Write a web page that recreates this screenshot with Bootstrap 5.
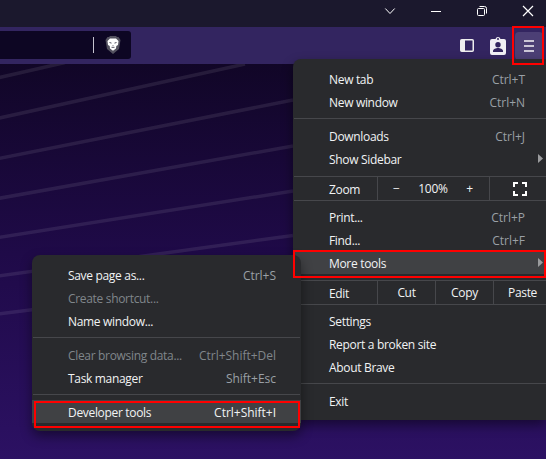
<!DOCTYPE html>
<html lang="en">
<head>
<meta charset="utf-8">
<title>Browser menu</title>
<link href="https://cdn.jsdelivr.net/npm/bootstrap@5.3.0/dist/css/bootstrap.min.css" rel="stylesheet">
<style>
body{width:546px;height:459px;overflow:hidden;font-family:"Open Sans","Noto Sans",sans-serif;font-size:12px;font-weight:500;letter-spacing:-.32px;color:#f1f3f4;background:#2b1060}
svg{display:block;flex:none}
.titlebar{height:27px;background:#1b182d;padding:5px 12px 0 0;gap:34px}
.titlebar svg{width:12px;height:12px}
.tools{height:37px;background:#332560;padding:4px 3px 0 0}
.address{width:131px;height:28px;background:#0d0623;border-radius:0 3px 3px 0;padding-right:10px;gap:11px}
.caret-line{width:1px;height:16px;background:#c5c3cf}
.menu-button{width:28px;height:28px;background:#4c3f75;border-radius:4px}
.page{height:395px;background:linear-gradient(#110627,#1f0a48 48%,#2c1163)}
.menu-panel{background:#292a2d;border-radius:8px;box-shadow:0 5px 12px rgba(0,0,0,.45);white-space:nowrap}
.main-menu{left:293px;top:59px;width:253px;height:361px;border-top-right-radius:0;border-bottom-right-radius:0;padding-top:8px}
.sub-menu{left:32px;top:255px;width:269px;height:176px;padding-top:8px}
.menu-row{height:23px;line-height:25px;padding-left:36px}
.main-menu .menu-row{padding-right:3px}
.sub-menu .menu-row{padding-right:25px}
.key{color:#9aa0a6;font-weight:400;letter-spacing:-.02px}
.main-menu .key{margin-right:18px}
.off,.off .key{color:#80868b}
.hot{background:#404144}
.hot .key{color:#f1f3f4}
.rule{height:1px;background:#46474b;margin:5px 0 5px 1px}
.rule-before{margin:6px 0 0 1px}
.rule-after{margin:0 0 4px 1px}
.sub-menu .rule{margin:5px 1px 5px 1px}
.split{height:23px;line-height:25px;padding-left:36px}
.split>span:first-child{width:48px;flex:none}
.cell{border-left:1px solid #46474b;text-align:center;line-height:23px}
.edit-cell{width:58px}
.zoom-cell{width:112px;padding:0 16px 0 15px;letter-spacing:-.25px}
.full-cell{padding-left:3px}
.arrow{width:5px;height:9px;margin-top:7px;background:#9a9b9d;clip-path:polygon(0 0,100% 50%,0 100%)}
.outline-red{border:2px solid #f00;z-index:5}
.r1{left:512px;top:26px;width:32px;height:39px}
.r2{left:293px;top:250px;width:253px;height:28px}
.r3{left:34px;top:401px;width:266px;height:27px}
</style>
<script src="https://cdn.jsdelivr.net/npm/bootstrap@5.3.0/dist/js/bootstrap.bundle.min.js"></script>
</head>
<body class="position-relative">
<header>
<div class="titlebar d-flex justify-content-end align-items-start">
<svg viewBox="0 0 12 12" fill="none" stroke="#fff"><path d="M1.3 3.500 6 8.500 10.700 3.500"/></svg>
<svg viewBox="0 0 12 12" fill="none" stroke="#fff"><path d="M1 6.500H11"/></svg>
<svg viewBox="0 0 12 12" fill="none" stroke="#fff"><rect x="1.500" y="3.500" width="7" height="7" rx="1"/><path d="M3.500 1.500H8.500Q10.500 1.500 10.500 3.500V8.500"/></svg>
<svg viewBox="0 0 12 12" fill="none" stroke="#fff" stroke-width="1.200"><path d="m1 1 10 10M11 1 1 11"/></svg>
</div>
<div class="tools d-flex align-items-start justify-content-between">
<div class="address d-flex align-items-center justify-content-end">
<span class="caret-line"></span>
<svg width="16" height="18" viewBox="0 0 16 18"><path d="M4 1 5 0h6l1 1h1.500L15.500 4 14 13 8 18 2 13 .5 4 2.500 1z" fill="#53515f"/><path d="M5 2.500h6L13.500 5l-.5 4-1.700 1-.3 2.500L8 14.800 5 12.500 4.700 10 3 9l-.5-4z" fill="#fff"/><path d="M4.500 6.500l2 .6M11.500 6.500l-2 .6M6.500 11.300h3" stroke="#53515f" fill="none"/><path d="M7.300 9h1.400L8 10z" fill="#53515f"/></svg>
</div>
<div class="d-flex align-items-center h-100 pb-1">
<svg class="me-3" width="14" height="13" viewBox="0 0 14 13"><rect x=".75" y=".75" width="12.500" height="11.500" rx="1" fill="none" stroke="#eee" stroke-width="1.500"/><path d="M1 1h4v11H1z" fill="#eee"/></svg>
<svg class="me-2" width="17" height="19" viewBox="0 0 17 19"><path d="M2 3h3.500a2.600 2.600 0 0 1 5 0H14q2 0 2 2v12q0 2-2 2H2q-2 0-2-2V5q0-2 2-2z" fill="#f1eff5"/><circle cx="8" cy="3" r="1" fill="#332560"/><circle cx="8" cy="8.700" r="2.700" fill="#332560"/><path d="M3 16v-1c0-2 3-3 5-3s5 1 5 3v1z" fill="#332560"/></svg>
<div class="menu-button d-flex align-items-center justify-content-center"><svg width="10" height="12" viewBox="0 0 10 12" stroke="#cbc6d6" stroke-width="2"><path d="M0 1h10M0 6h10M0 11h10"/></svg></div>
</div>
</div>
</header>
<main class="page"><svg width="546" height="395" viewBox="0 64 546 395" fill="none" stroke="#fff" stroke-opacity=".085" stroke-width="3.500"><path d="M-5 78.500 65 62.500M-5 119 245 64M-5 159.300 293 100M-5 199 293 146M-5 238 293 191M-5 276.400 293 235.500M-5 314.300 40 308.700"/></svg></main>

<nav class="menu-panel main-menu position-absolute">
<div class="menu-row d-flex justify-content-between"><span>New tab</span><span class="key">Ctrl+T</span></div>
<div class="menu-row d-flex justify-content-between"><span>New window</span><span class="key">Ctrl+N</span></div>
<div class="rule"></div>
<div class="menu-row d-flex justify-content-between"><span>Downloads</span><span class="key">Ctrl+J</span></div>
<div class="menu-row d-flex justify-content-between"><span>Show Sidebar</span><i class="arrow"></i></div>
<div class="rule rule-before"></div>
<div class="split d-flex"><span>Zoom</span>
<div class="cell zoom-cell d-flex justify-content-between"><span>−</span><span>100%</span><span>+</span></div>
<div class="cell full-cell d-flex flex-fill align-items-center justify-content-center"><svg width="14" height="14" viewBox="0 0 14 14" fill="none" stroke="#fff" stroke-width="2"><path d="M1 5V1h4M9 1h4v4M13 9v4H9M5 13H1V9"/></svg></div></div>
<div class="rule rule-after"></div>
<div class="menu-row d-flex justify-content-between"><span>Print...</span><span class="key">Ctrl+P</span></div>
<div class="menu-row d-flex justify-content-between"><span>Find...</span><span class="key">Ctrl+F</span></div>
<div class="menu-row hot d-flex justify-content-between"><span>More tools</span><i class="arrow"></i></div>
<div class="rule rule-before"></div>
<div class="split d-flex overflow-hidden"><span>Edit</span><div class="cell edit-cell flex-shrink-0">Cut</div><div class="cell edit-cell flex-shrink-0">Copy</div><div class="cell edit-cell flex-shrink-0">Paste</div></div>
<div class="rule rule-after"></div>
<div class="menu-row">Settings</div>
<div class="menu-row">Report a broken site</div>
<div class="menu-row">About Brave</div>
<div class="rule"></div>
<div class="menu-row">Exit</div>
</nav>
<nav class="menu-panel sub-menu position-absolute">
<div class="menu-row d-flex justify-content-between"><span>Save page as...</span><span class="key">Ctrl+S</span></div>
<div class="menu-row off">Create shortcut...</div>
<div class="menu-row">Name window...</div>
<div class="rule"></div>
<div class="menu-row d-flex justify-content-between off"><span>Clear browsing data...</span><span class="key">Ctrl+Shift+Del</span></div>
<div class="menu-row d-flex justify-content-between"><span>Task manager</span><span class="key">Shift+Esc</span></div>
<div class="rule"></div>
<div class="menu-row hot d-flex justify-content-between"><span>Developer tools</span><span class="key">Ctrl+Shift+I</span></div>
</nav>
<div class="outline-red r1 position-absolute"></div>
<div class="outline-red r2 position-absolute"></div>
<div class="outline-red r3 position-absolute"></div>
</body>
</html>
